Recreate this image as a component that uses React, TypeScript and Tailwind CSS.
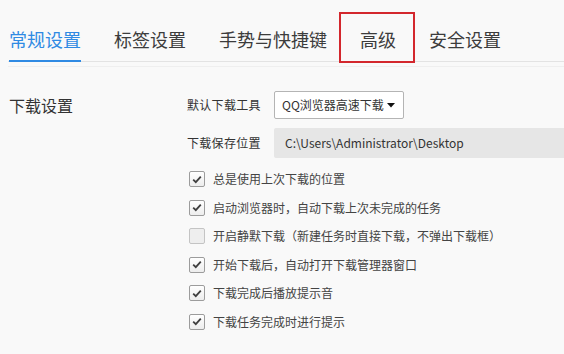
import { useState } from "react";

const tabs = ["常规设置", "标签设置", "手势与快捷键", "高级", "安全设置"];

const options = [
  { label: "总是使用上次下载的位置", checked: true },
  { label: "启动浏览器时，自动下载上次未完成的任务", checked: true },
  { label: "开启静默下载（新建任务时直接下载，不弹出下载框）", checked: false },
  { label: "开始下载后，自动打开下载管理器窗口", checked: true },
  { label: "下载完成后播放提示音", checked: true },
  { label: "下载任务完成时进行提示", checked: true },
];

export default function App() {
  const [active, setActive] = useState(0);
  const [checks, setChecks] = useState(options.map((o) => o.checked));

  return (
    <div
      className="relative w-[564px] h-[354px] overflow-hidden bg-[#f9f9f9] text-[#333]"
      style={{ fontFamily: '"Noto Sans CJK SC", "Microsoft YaHei", "Liberation Sans", sans-serif' }}
    >
      {/* tab bar */}
      <div className="ml-2 flex border-b border-[#e3e3e3]">
        {tabs.map((t, i) => (
          <button
            key={t}
            onClick={() => setActive(i)}
            className={`-mb-px ${i === 0 ? "ml-px" : "ml-[33px]"} pt-[27px] pb-[9px] border-b-2 text-[18px] leading-6 ${
              active === i
                ? "border-[#2f8ae3] text-[#2f8ae3]"
                : "border-transparent text-[#3c3c3c]"
            }`}
          >
            {t}
          </button>
        ))}
      </div>

      {/* annotation box */}
      <div className="absolute left-[339px] top-[12px] w-[76px] h-[51px] border-2 border-[#d3272d]" />

      <div className="ml-2 mt-[4px] border-t border-[#efefef] flex pt-[24px]">
        <div className="w-[179px] shrink-0 pl-px pt-[3px] text-[16px] leading-[22px] text-[#333]">
          下载设置
        </div>

        <div className="flex flex-col shrink-0">
          <div className="flex items-center h-[28px]">
            <span className="w-[87px] text-[12px] tracking-[0.3px] text-[#333]">默认下载工具</span>
            <div className="flex items-center h-[28px] w-[130px] pl-[7px] bg-white border border-[#b4b4b4] rounded-[2px]">
              <span className="text-[12px] text-[#333]">QQ浏览器高速下载</span>
              <svg width="8" height="5" viewBox="0 0 8 5" className="ml-auto mr-[8px]">
                <polygon points="0,0 8,0 4,4.5" fill="#111" />
              </svg>
            </div>
          </div>

          <div className="flex items-center h-[30px] mt-[9px]">
            <span className="w-[87px] text-[12px] tracking-[0.3px] text-[#333]">下载保存位置</span>
            <div className="flex items-center h-[30px] w-[320px] pl-[11px] bg-[#e6e6e6] rounded-l-[2px]">
              <span className="text-[12px] text-[#333]">C:\Users\Administrator\Desktop</span>
            </div>
          </div>

          <div className="mt-[7px] flex flex-col">
            {options.map((o, i) => (
              <label key={o.label} className="flex items-center h-[28.5px] cursor-pointer">
                <span
                  onClick={() => setChecks((c) => c.map((v, j) => (j === i ? !v : v)))}
                  className={`ml-[2px] w-[16px] h-[16px] rounded-[2px] border flex items-center justify-center ${
                    checks[i]
                      ? "border-[#9c9c9c] bg-gradient-to-b from-white to-[#ededed]"
                      : "border-[#c4c4c4] bg-[#eeeeee]"
                  }`}
                >
                  {checks[i] && (
                    <svg width="10" height="9" viewBox="0 0 10 9">
                      <polyline
                        points="1.2,4.6 3.8,7.2 8.8,1.6"
                        fill="none"
                        stroke="#3f3f3f"
                        strokeWidth="1.8"
                      />
                    </svg>
                  )}
                </span>
                <span className="ml-[8px] text-[12px] text-[#444]">{o.label}</span>
              </label>
            ))}
          </div>
        </div>
      </div>
    </div>
  );
}
